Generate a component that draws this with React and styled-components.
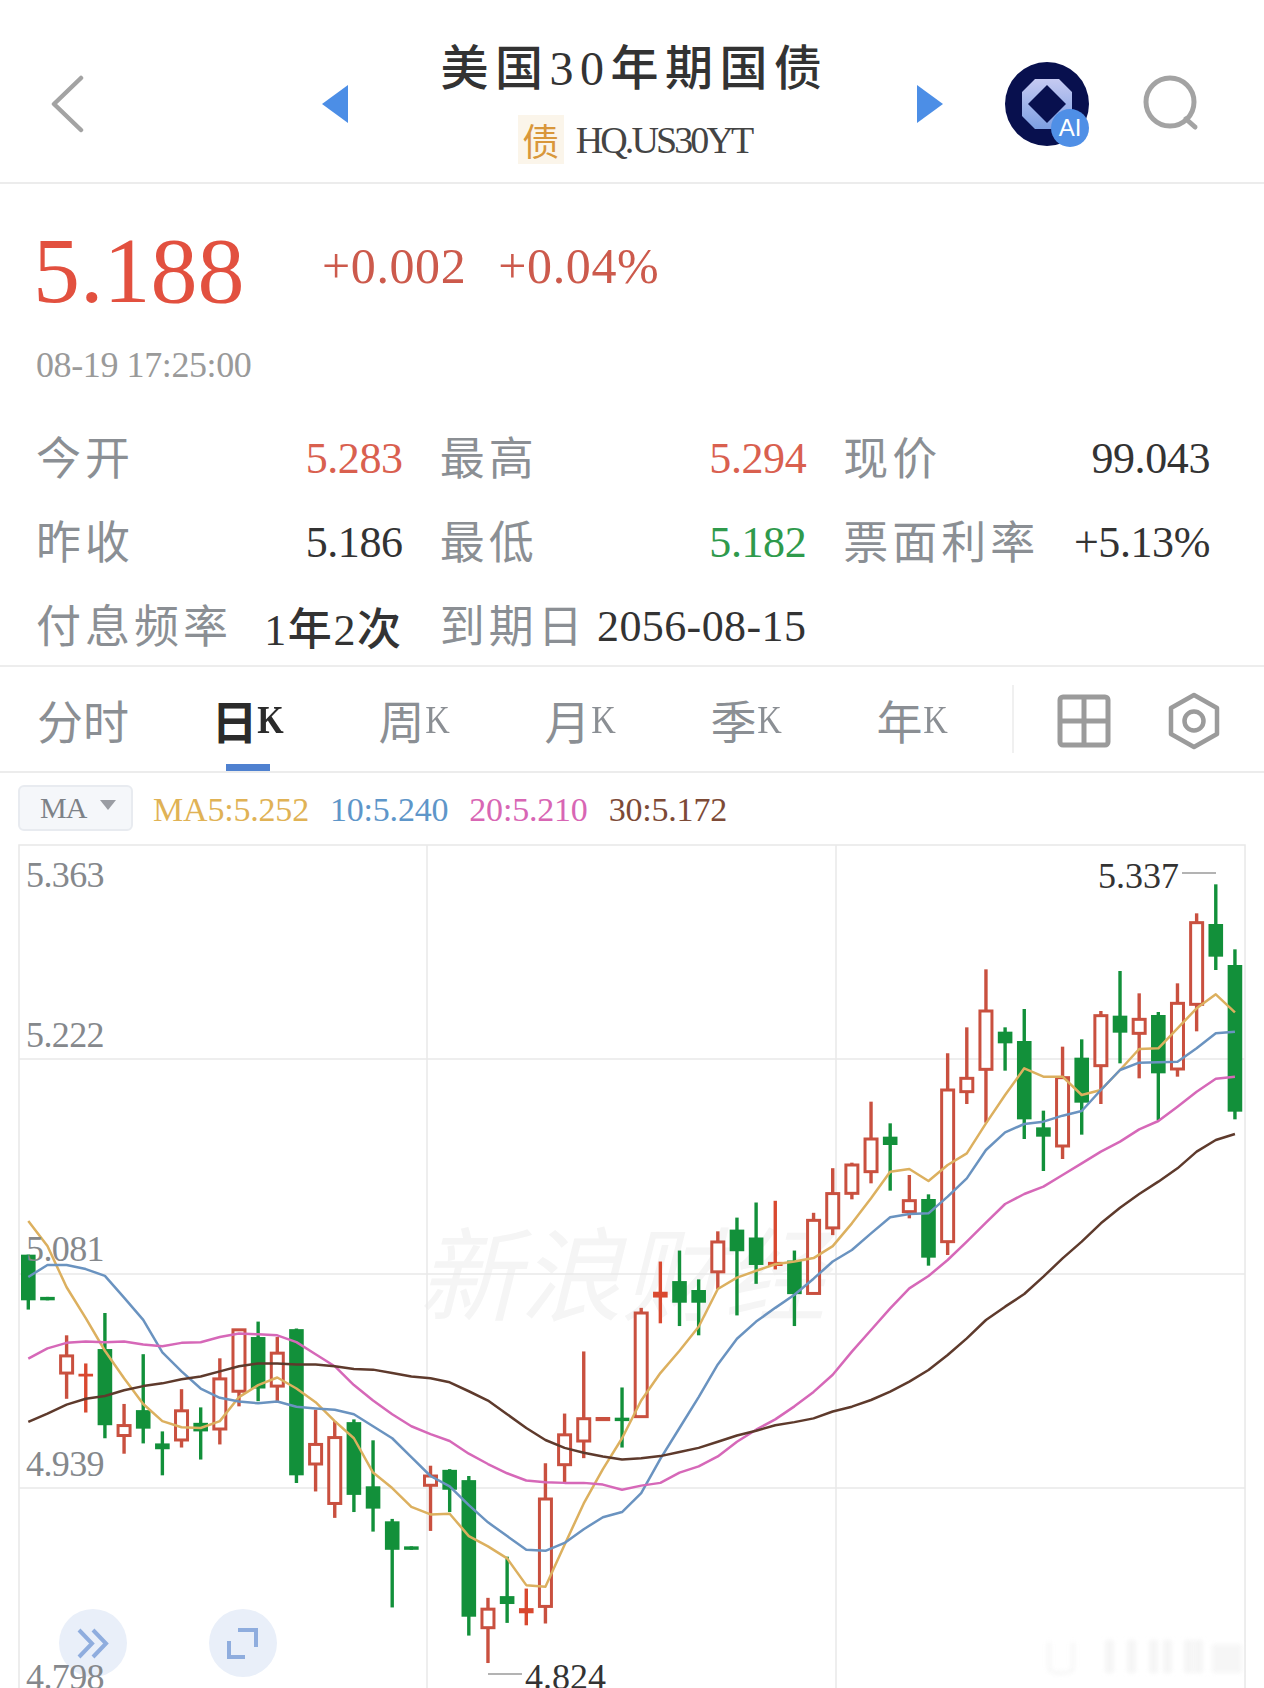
import styled, { createGlobalStyle } from "styled-components"

const GlobalStyle = createGlobalStyle`
    * { box-sizing: border-box; }
    body {
        margin: 0;
        background: #fff;
        font-family: "Liberation Serif", "Noto Sans CJK SC", serif;
    }
`

const CJK = `"Noto Sans CJK SC", "Noto Sans", sans-serif`
const NUM = `"Liberation Serif", "Noto Sans CJK SC", serif`
const GREEN = "#2f9a4c"

const Page = styled.div`
    width: 1264px;
    height: 1688px;
    overflow: hidden;
    background: #fff;
`

/* ---------- header ---------- */
const Header = styled.header`
    height: 184px;
    padding-top: 26px;
    display: flex;
    align-items: center;
    border-bottom: 2px solid #ececec;
`
const BackSlot = styled.div`
    width: 322px;
    padding-left: 50px;
    display: flex;
    align-items: center;
`
const TitleBlock = styled.div`
    width: 569px;
    padding-left: 4px;
    margin-bottom: 8px;
    display: flex;
    flex-direction: column;
    align-items: center;
`
const Title = styled.h1`
    margin: 0;
    font-family: ${NUM};
    font-size: 48px;
    line-height: 56px;
    font-weight: 500;
    letter-spacing: 6.5px;
    color: #333;
    white-space: nowrap;
    & > span { font-family: ${CJK}; }
`
const SubRow = styled.div`
    margin-top: 18px;
    display: flex;
    align-items: center;
    gap: 12px;
`
const BondBadge = styled.span`
    width: 46px;
    height: 49px;
    background: #fbf5ea;
    color: #d9973a;
    font-family: ${CJK};
    font-size: 37px;
    display: flex;
    align-items: center;
    justify-content: center;
`
const Code = styled.span`
    font-size: 38px;
    letter-spacing: -2.9px;
    color: #444;
`
const AiAvatar = styled.div`
    position: relative;
    width: 84px;
    height: 84px;
    margin-left: 62px;
`
const AiBadge = styled.span`
    position: absolute;
    left: 46px;
    top: 47px;
    width: 38px;
    height: 38px;
    border-radius: 50%;
    background: #4f8fe6;
    color: #fff;
    font-family: "Liberation Sans", sans-serif;
    font-size: 24px;
    display: flex;
    align-items: center;
    justify-content: center;
`
const SearchSlot = styled.div`
    margin-left: 54px;
    display: flex;
`

/* ---------- quote ---------- */
const Quote = styled.section`
    height: 483px;
    padding: 38px 54px 0 36px;
    border-bottom: 2px solid #ededed;
`
const PriceRow = styled.div`
    display: flex;
    align-items: flex-start;
    height: 96px;
`
const Price = styled.div`
    width: 289px;
    margin-left: -3px;
    font-size: 94px;
    line-height: 96px;
    color: #e2503f;
`
const Change = styled.div`
    margin-top: 14px;
    margin-right: 32px;
    font-size: 50px;
    line-height: 60px;
    letter-spacing: 0.6px;
    color: #cc5a4c;
`
const Stamp = styled.div`
    margin-top: 27px;
    font-size: 36px;
    line-height: 40px;
    color: #9a9a9a;
    letter-spacing: -0.4px;
`
const InfoGrid = styled.div`
    margin-top: 28px;
    display: grid;
    grid-template-columns: repeat(3, 1fr);
    grid-auto-rows: 84px;
    column-gap: 37px;
`
const Cell = styled.div`
    display: flex;
    align-items: center;
    justify-content: space-between;
`
const Label = styled.span`
    font-family: ${CJK};
    font-size: 45px;
    letter-spacing: 4px;
    color: #8b8f94;
    white-space: nowrap;
`
const Value = styled.span`
    padding-top: 6px;
    font-size: 44px;
    letter-spacing: ${props => props.$wide ? "0.4px" : "-0.4px"};
    color: ${props => props.$color || "#333"};
    white-space: nowrap;
    & > i {
        margin: 0 2px;
        font-style: normal;
        font-family: ${CJK};
        font-size: 44px;
        font-weight: 500;
    }
`

/* ---------- tabs ---------- */
const Tabs = styled.nav`
    height: 106px;
    display: flex;
    align-items: center;
    border-bottom: 2px solid #ececec;
`
const Tab = styled.div`
    position: relative;
    width: 166px;
    height: 104px;
    display: flex;
    align-items: center;
    justify-content: center;
    color: ${props => props.$active ? "#2b2b2b" : "#8b8f94"};
    font-family: ${CJK};
    font-size: 46px;
    font-weight: ${props => props.$active ? 700 : 400};
    & > b {
        font-family: ${NUM};
        font-size: 40px;
        font-weight: inherit;
        transform: scaleX(0.85);
        margin-left: -2px;
    }
    ${props => props.$active && `
        &::after {
            content: "";
            position: absolute;
            left: 60px;
            bottom: 0;
            width: 44px;
            height: 7px;
            background: #4f81d0;
        }
    `}
`
const TabDivider = styled.div`
    width: 2px;
    height: 68px;
    margin-left: 16px;
    background: #f0f0f0;
`
const ToolIcons = styled.div`
    display: flex;
    align-items: center;
    margin: 3px 0 0 43px;
    gap: 57px;
`

/* ---------- MA legend ---------- */
const LegendBar = styled.div`
    height: 71px;
    padding: 12px 0 0 18px;
    display: flex;
    align-items: flex-start;
`
const MaButton = styled.div`
    width: 115px;
    height: 46px;
    border: 2px solid #e8ebf0;
    border-radius: 6px;
    background: #f5f7fa;
    color: #7d8288;
    font-size: 30px;
    display: flex;
    align-items: center;
    padding-left: 20px;
    gap: 14px;
    letter-spacing: -1px;
    &::after {
        content: "";
        border-left: 8px solid transparent;
        border-right: 8px solid transparent;
        border-top: 10px solid #9a9da3;
        margin-top: -6px;
    }
`
const Legend = styled.div`
    margin: 2px 0 0 20px;
    height: 46px;
    display: flex;
    align-items: center;
    gap: 21px;
`
const LegendItem = styled.span`
    font-size: 34px;
    letter-spacing: -0.2px;
    color: ${props => props.$color};
`

/* ---------- chart ---------- */
const Chart = styled.div`
    position: relative;
    width: 1228px;
    height: 844px;
    margin-left: 18px;
    overflow: hidden;
`
const ChartSvg = styled.svg`
    display: block;
    position: relative;
`
const Watermark = styled.div`
    position: absolute;
    left: 400px;
    top: 370px;
    font-family: ${CJK};
    font-size: 102px;
    font-style: italic;
    line-height: 110px;
    color: #f5f5f5;
    white-space: nowrap;
`
const AxisLabel = styled.span`
    position: absolute;
    left: ${props => props.$x - 18}px;
    top: ${props => props.$y - 844 - 20}px;
    line-height: 40px;
    font-size: 36px;
    letter-spacing: ${props => props.$color ? "0" : "-0.6px"};
    color: ${props => props.$color || "#85888c"};
`
const RoundButton = styled.div`
    position: absolute;
    left: ${props => props.$x - 18}px;
    top: 765px;
    width: 68px;
    height: 68px;
    border-radius: 50%;
    background: #e9eff9;
    display: flex;
`

/* Candles read off the chart. y values are in two crops of the screenshot, see toY */
const toY = (v, i) => (i <= 42 ? 1150 + v / 2.914 : 840 + v / 3)
const candleX = i => 28.3 + 19.153 * i

const CANDLES = [
    ["g", 305, 305, 438, 465], ["g", 428, 428, 438, 438], ["r", 540, 600, 650, 725], ["x", 622, 652, 660, 765],
    ["g", 475, 580, 802, 840], ["r", 740, 803, 832, 885], ["g", 595, 758, 812, 855], ["g", 820, 855, 872, 948],
    ["r", 697, 760, 845, 867], ["g", 750, 795, 820, 902], ["r", 607, 667, 813, 858], ["r", 522, 524, 703, 747],
    ["g", 500, 545, 695, 732], ["r", 545, 592, 688, 732], ["g", 520, 522, 948, 970], ["r", 757, 858, 915, 995],
    ["r", 790, 838, 1030, 1072], ["g", 785, 793, 1005, 1055], ["g", 846, 980, 1045, 1112], ["g", 1075, 1082, 1165, 1333],
    ["g", 1155, 1155, 1165, 1165], ["r", 920, 950, 977, 1110], ["g", 930, 932, 990, 1055], ["g", 950, 962, 1360, 1415],
    ["r", 1305, 1338, 1392, 1495], ["g", 1185, 1300, 1323, 1378], ["x", 1278, 1335, 1350, 1385], ["r", 913, 1017, 1330, 1380],
    ["r", 768, 830, 917, 970], ["r", 587, 783, 848, 898], ["d", 778, 778, 790, 790], ["g", 692, 780, 790, 867],
    ["r", 460, 475, 777, 777], ["x", 325, 413, 430, 505], ["g", 293, 382, 445, 513], ["g", 377, 408, 445, 540],
    ["r", 237, 268, 355, 405], ["g", 197, 232, 295, 482], ["g", 153, 255, 335, 390], ["x", 148, 326, 338, 348],
    ["g", 293, 322, 420, 513], ["r", 183, 205, 418, 418], ["r", 53, 127, 227, 248],
    ["r", 968, 975, 1060, 1078], ["r", 785, 897, 995, 1030], ["g", 850, 890, 915, 1052], ["r", 1005, 1082, 1115, 1135],
    ["g", 1063, 1077, 1253, 1277], ["r", 640, 750, 1205, 1245], ["r", 562, 715, 755, 792], ["r", 388, 513, 688, 848],
    ["g", 562, 575, 610, 692], ["g", 507, 603, 838, 897], ["g", 812, 862, 890, 993], ["r", 620, 713, 918, 957],
    ["g", 598, 653, 788, 884], ["r", 513, 527, 677, 792], ["g", 393, 527, 578, 670], ["r", 460, 538, 580, 715],
    ["g", 516, 525, 700, 840], ["r", 430, 490, 687, 710], ["r", 220, 248, 493, 574], ["g", 133, 252, 350, 390],
    ["g", 328, 375, 815, 838],
]

const MA_LINES = [
    {
        color: "#dcb05f",
        values: [207, 280, 400, 490, 585, 665, 740, 790, 808, 810, 790, 720, 685, 663, 695, 735, 790, 840, 940, 985, 1040,
            1062, 1060, 1125, 1155, 1190, 1268, 1273, 1150, 1030, 930, 840, 730, 650, 585, 515, 405, 372, 352, 333, 325, 315, 280,
            1150, 1075, 995, 987, 1023, 975, 940, 850, 765, 685, 710, 710, 765, 750, 690, 627, 625, 565, 505, 463, 517],
    },
    {
        color: "#6a93c0",
        values: [370, 335, 335, 347, 367, 430, 495, 590, 645, 695, 722, 733, 738, 733, 748, 753, 757, 770, 805, 840, 895,
            950, 980, 1035, 1085, 1125, 1165, 1168, 1145, 1105, 1070, 1055, 1000, 900, 810, 720, 625, 550, 500, 460, 422, 375, 325,
            1230, 1180, 1132, 1122, 1120, 1070, 1015, 930, 877, 852, 845, 827, 813, 750, 690, 668, 667, 665, 625, 580, 575],
    },
    {
        color: "#d668b8",
        values: [608, 578, 562, 558, 560, 558, 567, 572, 562, 560, 545, 535, 537, 540, 560, 595, 630, 685, 730, 770, 805,
            828, 848, 885, 915, 942, 963, 968, 970, 970, 975, 990, 978, 970, 940, 922, 893, 850, 815, 785, 747, 705, 655,
            1535, 1470, 1405, 1345, 1308, 1260, 1205, 1148, 1092, 1062, 1040, 1005, 970, 935, 905, 868, 843, 800, 755, 716, 710],
    },
    {
        color: "#5e3a2c",
        values: [792, 768, 742, 725, 717, 700, 688, 680, 668, 660, 645, 630, 622, 622, 625, 625, 630, 638, 640, 650, 660,
            665, 677, 703, 730, 770, 810, 845, 868, 882, 893, 902, 898, 892, 880, 868, 850, 832, 818, 802, 793, 782, 762,
            1700, 1680, 1655, 1625, 1590, 1545, 1495, 1440, 1400, 1362, 1310, 1255, 1205, 1150, 1103, 1062, 1025, 985, 935, 900, 882],
    },
]

const CANDLE_COLOR = { g: "#12903a", r: "#c9503f", x: "#d9482f", d: "#c9503f" }

const Candle = ({ data, index }) => {
    const [kind, high, top, bottom, low] = data
    const x = candleX(index)
    const color = CANDLE_COLOR[kind]
    const yTop = toY(top, index)
    const yBottom = toY(bottom, index)
    const hollow = kind === "r"
    return (
        <g>
            {kind !== "d" && (
                <line x1={x} x2={x} y1={toY(high, index)} y2={toY(low, index)} stroke={color} strokeWidth="3.4" />
            )}
            {hollow ? (
                <rect x={x - 6} y={yTop} width="12" height={yBottom - yTop} fill="#fff" stroke={color} strokeWidth="3" />
            ) : (
                <rect x={x - 7.3} y={yTop} width="14.6" height={yBottom - yTop} fill={color} />
            )}
        </g>
    )
}

const PriceChart = () => (
    <ChartSvg width="1228" height="844" viewBox="18 844 1228 844">
        <g stroke="#e8e8e8" strokeWidth="1.5" fill="none">
            <rect x="19" y="845" width="1226" height="900" />
            <line x1="427" x2="427" y1="845" y2="1688" />
            <line x1="836" x2="836" y1="845" y2="1688" />
            <line x1="19" x2="1245" y1="1059" y2="1059" />
            <line x1="19" x2="1245" y1="1274" y2="1274" />
            <line x1="19" x2="1245" y1="1488" y2="1488" />
        </g>
        <g opacity="0.6" style={{ filter: "blur(2px)" }}>
            <path d="M1049 1642v26q0 5 12 5t12-5v-26" fill="none" stroke="#eeeeee" strokeWidth="3" />
            {[1105, 1127, 1149, 1163, 1184, 1194].map(x => (
                <rect key={x} x={x} y="1640" width="9" height="33" fill="#efefef" />
            ))}
            <rect x="1212" y="1644" width="30" height="29" fill="#f1f1f1" />
        </g>
        {CANDLES.map((candle, i) => <Candle key={i} data={candle} index={i} />)}
        {MA_LINES.map(line => (
            <polyline
                key={line.color}
                points={line.values.map((v, i) => `${candleX(i)},${toY(v, i)}`).join(" ")}
                fill="none"
                stroke={line.color}
                strokeWidth="2.5"
                strokeLinejoin="round"
            />
        ))}
        <line x1="1182" x2="1216" y1="873" y2="873" stroke="#9a9a9a" strokeWidth="1.5" />
        <line x1="488" x2="522" y1="1674" y2="1674" stroke="#9a9a9a" strokeWidth="1.5" />
    </ChartSvg>
)

const INFO = [
    { label: "今开", value: "5.283", color: "#d9604f" },
    { label: "最高", value: "5.294", color: "#d9604f" },
    { label: "现价", value: "99.043" },
    { label: "昨收", value: "5.186" },
    { label: "最低", value: "5.182", color: GREEN },
    { label: "票面利率", value: "+5.13%" },
    { label: "付息频率", value: <>1<i>年</i>2<i>次</i></> },
    { label: "到期日", value: "2056-08-15", wide: true },
]

const TABS = ["分时", "日", "周", "月", "季", "年"]

const LEGEND = [
    { text: "MA5:5.252", color: "#e0b255" },
    { text: "10:5.240", color: "#5e96c9" },
    { text: "20:5.210", color: "#d866b4" },
    { text: "30:5.172", color: "#7d4a36" },
]

const App = () => (
    <Page>
        <GlobalStyle />
        <Header>
            <BackSlot>
                <svg width="34" height="58" viewBox="0 0 34 58">
                    <path d="M31 3 4 29l27 26" fill="none" stroke="#a3a3a3" strokeWidth="4.5" strokeLinecap="round" strokeLinejoin="round" />
                </svg>
            </BackSlot>
            <svg width="26" height="38" viewBox="0 0 26 38">
                <path d="M26 0v38L0 19z" fill="#4c8ee6" />
            </svg>
            <TitleBlock>
                <Title><span>美国</span>30<span>年期国债</span></Title>
                <SubRow>
                    <BondBadge>债</BondBadge>
                    <Code>HQ.US30YT</Code>
                </SubRow>
            </TitleBlock>
            <svg width="26" height="38" viewBox="0 0 26 38">
                <path d="M0 0v38l26-19z" fill="#4c8ee6" />
            </svg>
            <AiAvatar>
                <svg width="84" height="84" viewBox="0 0 84 84">
                    <defs>
                        <linearGradient id="ring" x1="0" y1="0" x2="0" y2="1">
                            <stop offset="0" stopColor="#c6caf2" />
                            <stop offset="1" stopColor="#7d9fe2" />
                        </linearGradient>
                    </defs>
                    <circle cx="42" cy="42" r="42" fill="#08104e" />
                    <path
                        d="M30 17h24l13 13v24L54 67H30L17 54V30zM42 23 23 42l19 19 19-19z"
                        fill="url(#ring)"
                        fillRule="evenodd"
                    />
                </svg>
                <AiBadge>AI</AiBadge>
            </AiAvatar>
            <SearchSlot>
                <svg width="56" height="58" viewBox="0 0 56 58">
                    <circle cx="27" cy="27" r="24" fill="none" stroke="#a3a3a3" strokeWidth="5" />
                    <path d="M43 44l9 8" stroke="#a3a3a3" strokeWidth="5" strokeLinecap="round" />
                </svg>
            </SearchSlot>
        </Header>

        <Quote>
            <PriceRow>
                <Price>5.188</Price>
                <Change>+0.002</Change>
                <Change>+0.04%</Change>
            </PriceRow>
            <Stamp>08-19 17:25:00</Stamp>
            <InfoGrid>
                {INFO.map(item => (
                    <Cell key={item.label}>
                        <Label>{item.label}</Label>
                        <Value $color={item.color} $wide={item.wide}>{item.value}</Value>
                    </Cell>
                ))}
            </InfoGrid>
        </Quote>

        <Tabs>
            {TABS.map((tab, i) => (
                <Tab key={tab} $active={tab === "日"}>
                    {tab}{i > 0 && <b>K</b>}
                </Tab>
            ))}
            <TabDivider />
            <ToolIcons>
                <svg width="54" height="54" viewBox="0 0 54 54">
                    <rect x="3" y="3" width="48" height="48" rx="3" fill="none" stroke="#9b9b9b" strokeWidth="5" />
                    <path d="M27 3v48M3 27h48" stroke="#9b9b9b" strokeWidth="5" />
                </svg>
                <svg width="52" height="58" viewBox="0 0 52 58">
                    <path d="M26 3 49 16v26L26 55 3 42V16z" fill="none" stroke="#9b9b9b" strokeWidth="4.5" strokeLinejoin="round" />
                    <circle cx="26" cy="29" r="9.5" fill="none" stroke="#9b9b9b" strokeWidth="4.5" />
                </svg>
            </ToolIcons>
        </Tabs>

        <LegendBar>
            <MaButton>MA</MaButton>
            <Legend>
                {LEGEND.map(item => (
                    <LegendItem key={item.text} $color={item.color}>{item.text}</LegendItem>
                ))}
            </Legend>
        </LegendBar>

        <Chart>
            <Watermark>新浪财经</Watermark>
            <PriceChart />
            <RoundButton $x={59}>
                <svg width="68" height="68" viewBox="0 0 68 68">
                    <path d="M20 21l13 13.5L20 48M34 21l13 13.5L34 48" fill="none" stroke="#8fadde" strokeWidth="4" />
                </svg>
            </RoundButton>
            <RoundButton $x={209}>
                <svg width="68" height="68" viewBox="0 0 68 68">
                    <path d="M29 21h18v17M20 32v16h16" fill="none" stroke="#8fadde" strokeWidth="4" />
                </svg>
            </RoundButton>
            <AxisLabel $x={26} $y={875}>5.363</AxisLabel>
            <AxisLabel $x={26} $y={1035}>5.222</AxisLabel>
            <AxisLabel $x={26} $y={1249}>5.081</AxisLabel>
            <AxisLabel $x={26} $y={1464}>4.939</AxisLabel>
            <AxisLabel $x={26} $y={1677}>4.798</AxisLabel>
            <AxisLabel $x={1098} $y={876} $color="#333">5.337</AxisLabel>
            <AxisLabel $x={525} $y={1677} $color="#333">4.824</AxisLabel>
        </Chart>
    </Page>
)

export default App
